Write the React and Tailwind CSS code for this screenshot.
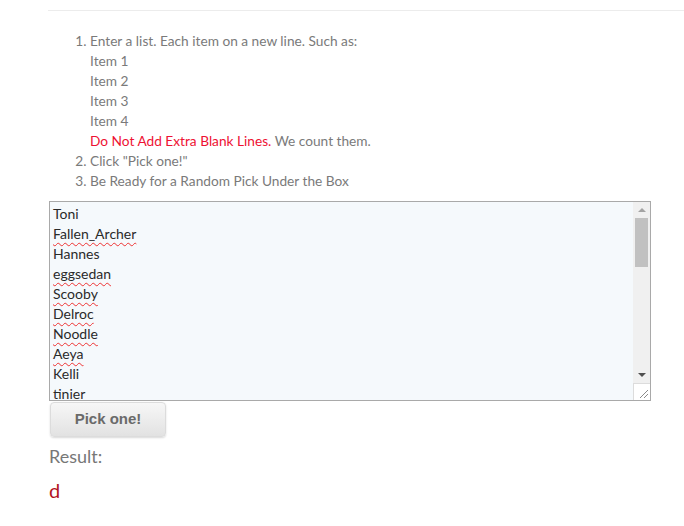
import { useState } from "react";

const names = [
  { n: "Toni" },
  { n: "Fallen_Archer", typo: true },
  { n: "Hannes" },
  { n: "eggsedan", typo: true },
  { n: "Scooby", typo: true },
  { n: "Delroc", typo: true },
  { n: "Noodle", typo: true },
  { n: "Aeya", typo: true },
  { n: "Kelli" },
  { n: "tinier" },
];

export default function App() {
  const [result] = useState("d");

  return (
    <div className="min-h-screen bg-white font-['Lato','Liberation_Sans',sans-serif]">
      <div className="pl-[48px] pt-[10px]">
        <div className="border-t border-[#ececec]" />
      </div>

      <div className="pl-[49px]">
        {/* ================= INSTRUCTIONS ================= */}
        <ol className="mt-[20px] list-decimal pl-[41px] text-[13.7px] leading-[20px] text-[#7a7a7a]">
          <li>
            Enter a list. Each item on a new line. Such as:
            <div>Item 1</div>
            <div>Item 2</div>
            <div>Item 3</div>
            <div>Item 4</div>
            <div>
              <span className="text-[#ee1133]">Do Not Add Extra Blank Lines.</span>{" "}
              We count them.
            </div>
          </li>
          <li>Click "Pick one!"</li>
          <li>Be Ready for a Random Pick Under the Box</li>
        </ol>

        {/* ================= TEXTAREA ================= */}
        <div className="mt-[10px] flex h-[200px] w-[602px] border border-[#a9a9a9] bg-[#f5f9fc]">
          <div className="flex-1 overflow-hidden pl-[3px] pt-[2px] text-[14px] leading-[20px] text-[#2a2a2a]">
            {names.map((x) => (
              <div key={x.n}>
                <span
                  className={
                    x.typo
                      ? "underline decoration-wavy decoration-[#e33] decoration-1 underline-offset-[3px]"
                      : ""
                  }
                >
                  {x.n}
                </span>
              </div>
            ))}
          </div>

          {/* scrollbar */}
          <div className="flex w-[17px] flex-col bg-[#f0f0f0]">
            <div className="flex h-[16px] items-center justify-center">
              <div className="h-0 w-0 border-x-[4px] border-b-[4px] border-x-transparent border-b-[#a3a3a3]" />
            </div>
            <div className="mx-[2px] h-[49px] bg-[#c1c1c1]" />
            <div className="flex-1" />
            <div className="flex h-[16px] items-center justify-center">
              <div className="h-0 w-0 border-x-[4px] border-t-[4px] border-x-transparent border-t-[#505050]" />
            </div>
            <div className="relative h-[17px] border-l border-t border-[#dcdcdc] bg-white">
              <svg className="absolute right-[1px] bottom-[1px]" width="11" height="11" viewBox="0 0 11 11">
                <line x1="2" y1="10" x2="10" y2="2" stroke="#8a8a8a" strokeWidth="1" />
                <line x1="6" y1="10" x2="10" y2="6" stroke="#8a8a8a" strokeWidth="1" />
              </svg>
            </div>
          </div>
        </div>

        {/* ================= BUTTON ================= */}
        <button className="ml-[1px] mt-[1px] flex h-[35px] w-[116px] items-center justify-center rounded-[4px] border border-[#dcdcdc] bg-gradient-to-b from-[#f7f7f7] to-[#e2e2e2] font-['Liberation_Sans',Arial,sans-serif] text-[15px] font-bold text-[#6a6a6a] shadow-[0_1px_2px_rgba(0,0,0,0.15)]">
          Pick one!
        </button>

        {/* ================= RESULT ================= */}
        <div className="mt-[7px] text-[18px] leading-[24px] text-[#777]">Result:</div>
        <div className="mt-[10px] text-[20px] leading-[24px] text-[#b3141f]">{result}</div>
      </div>
    </div>
  );
}
